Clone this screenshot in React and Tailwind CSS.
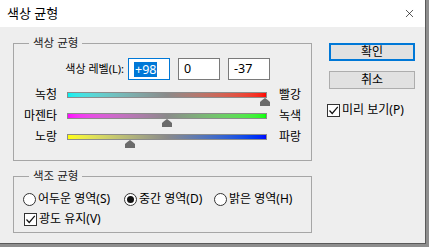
import { X } from "lucide-react";

const font = "font-['Noto_Sans','Noto_Sans_CJK_KR',sans-serif]";

const sliders = [
  { left: "녹청", right: "빨강", value: 98, bar: "from-[#00f0f0] via-[#8a8a8a] to-[#ff0000]" },
  { left: "마젠타", right: "녹색", value: 0, bar: "from-[#ff00ff] via-[#8a8a8a] to-[#00ff00]" },
  { left: "노랑", right: "파랑", value: -37, bar: "from-[#ffff00] via-[#8a8a8a] to-[#0000ff]" },
];

const Check = () => (
  <span className="flex h-[13px] w-[13px] items-center justify-center border border-[#333] bg-white">
    <svg width="11" height="11" viewBox="0 0 11 11">
      <path d="M1.5 5.5 L4.2 8.5 L9.8 1.8" fill="none" stroke="#111" strokeWidth="1.2" />
    </svg>
  </span>
);

const Radio = ({ checked }) => (
  <span className="flex h-[13px] w-[13px] items-center justify-center rounded-full border border-[#333] bg-white">
    {checked && <span className="h-[7px] w-[7px] rounded-full bg-[#111]" />}
  </span>
);

const Thumb = ({ value }) => (
  <svg
    width="10"
    height="8"
    viewBox="0 0 10 8"
    className="absolute top-[5px]"
    style={{ left: value + 100 - 6 }}
  >
    <path d="M5 0 Q8 2 10 4 L10 8 L0 8 L0 4 Q2 2 5 0 Z" fill="#6b6b6b" />
  </svg>
);

export default function App() {
  return (
    <div className={`h-[247px] w-[429px] overflow-hidden bg-[#8e8e8e] text-[12px] text-black ${font}`}>
      <div className="flex h-[244px] w-[426px] flex-col border-r border-b border-[#5a5a5a] bg-[#eeeeee]">
        <div className="flex h-[27px] items-center justify-between bg-white pl-[7px] pr-[9px]">
          <span className="text-[13px] leading-[15px]">색상 균형</span>
          <X className="h-[13px] w-[13px]" strokeWidth={1.2} />
        </div>

        <div className="flex flex-1">
          <div className="pl-[13px] pt-[9px]">
            <fieldset className="w-[299px] border border-[#a6a6a6] pb-[16px]">
              <legend className="ml-[15px] px-[4px] text-[11.5px] leading-[14px] text-[#222]">색상 균형</legend>
              <div className="mt-[8px] flex items-center">
                <span className="w-[110px] text-right text-[11px] leading-[14px]">색상 레벨(L):</span>
                <div className="ml-[4px] flex gap-[8px]">
                  <div className="flex h-[22px] w-[42px] items-center border border-[#0078d7] bg-white pl-[5px]">
                    <span className="bg-[#0078d7] px-[1px] text-[12.5px] leading-[15px] text-white">+98</span>
                  </div>
                  <div className="flex h-[22px] w-[42px] items-center border border-[#7a7a7a] bg-white pl-[5px] text-[12.5px]">
                    0
                  </div>
                  <div className="flex h-[22px] w-[42px] items-center border border-[#7a7a7a] bg-white pl-[5px] text-[12.5px]">
                    -37
                  </div>
                </div>
              </div>
              <div className="mt-[8px] flex flex-col gap-[7px]">
                {sliders.map((s) => (
                  <div key={s.left} className="flex h-[14px] items-center">
                    <span className="w-[43px] text-right leading-[14px]">{s.left}</span>
                    <div className={`relative ml-[10px] h-[6px] w-[200px] border border-[#8c8c8c] bg-linear-to-r ${s.bar}`}>
                      <Thumb value={s.value} />
                    </div>
                    <span className="ml-[12px] leading-[14px]">{s.right}</span>
                  </div>
                ))}
              </div>
            </fieldset>

            <fieldset className="mt-[8px] w-[299px] border border-[#a6a6a6] pb-[6px]">
              <legend className="ml-[15px] px-[4px] text-[11.5px] leading-[14px] text-[#222]">색조 균형</legend>
              <div className="mt-[9px] flex h-[14px] items-center pl-[9px]">
                <label className="flex w-[101px] items-center gap-[2px]">
                  <Radio />
                  <span className="leading-[14px]">어두운 영역(S)</span>
                </label>
                <label className="flex w-[90px] items-center gap-[2px]">
                  <Radio checked />
                  <span className="leading-[14px]">중간 영역(D)</span>
                </label>
                <label className="flex items-center gap-[2px]">
                  <Radio />
                  <span className="leading-[14px]">밝은 영역(H)</span>
                </label>
              </div>
              <div className="mt-[6px] flex h-[14px] items-center gap-[2px] pl-[10px]">
                <Check />
                <span className="leading-[14px]">광도 유지(V)</span>
              </div>
            </fieldset>
          </div>

          <div className="ml-[15px] flex flex-col pt-[16px]">
            <button className="ml-[2px] flex h-[18px] w-[86px] items-center justify-center border-2 border-[#0078d7] bg-[#e1e1e1] leading-[14px]">
              확인
            </button>
            <button className="ml-[2px] mt-[10px] flex h-[18px] w-[86px] items-center justify-center border border-[#adadad] bg-[#e1e1e1] leading-[14px]">
              취소
            </button>
            <div className="mt-[14px] flex h-[14px] items-center gap-[2px]">
              <Check />
              <span className="leading-[14px]">미리 보기(P)</span>
            </div>
          </div>
        </div>
      </div>
    </div>
  );
}
